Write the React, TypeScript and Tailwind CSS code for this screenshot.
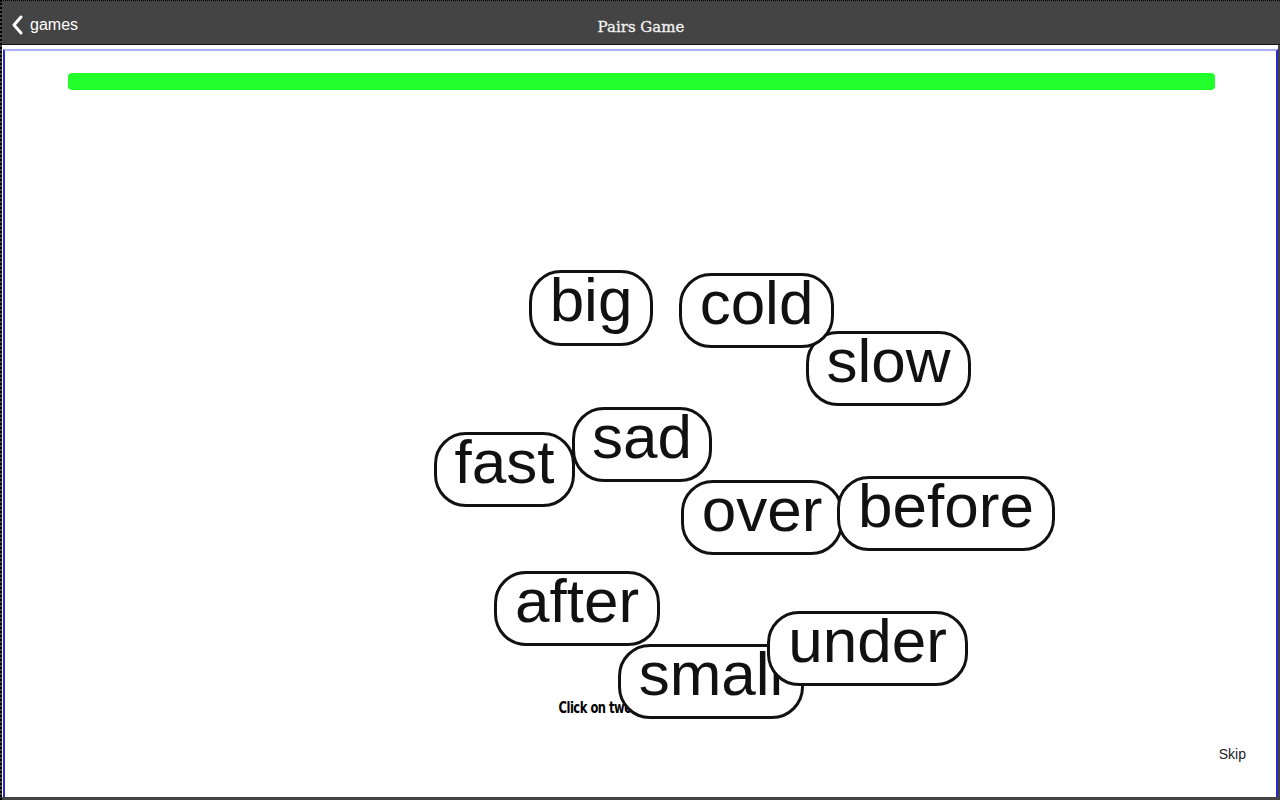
import React from "react";

type Pill = { word: string; x: number; y: number; w: number; h: number };

const OX = 6;
const OY = 52;

const pills: Pill[] = [
  { word: "slow", x: 807, y: 332, w: 165, h: 75 },
  { word: "cold", x: 680, y: 274, w: 155, h: 75 },
  { word: "big", x: 530, y: 271, w: 124, h: 76 },
  { word: "fast", x: 435, y: 433, w: 141, h: 75 },
  { word: "sad", x: 573, y: 408, w: 140, h: 75 },
  { word: "over", x: 682, y: 481, w: 162, h: 75 },
  { word: "before", x: 838, y: 477, w: 218, h: 75 },
  { word: "after", x: 495, y: 572, w: 166, h: 75 },
  { word: "small", x: 619, y: 645, w: 186, h: 75 },
  { word: "under", x: 768, y: 612, w: 201, h: 75 },
];

export default function App() {
  return (
    <div className="relative flex h-[800px] w-[1280px] flex-col overflow-hidden border-t border-l-2 border-dotted border-black bg-[#444444]">
      <header className="relative flex h-[44px] shrink-0 items-center border-b border-[#141414] bg-[#444444]">
        <div className="flex items-center pl-[8px] pt-[5px] text-white">
          <svg width="16" height="22" viewBox="0 0 16 22" fill="none">
            <path d="M11 3 L4 11 L11 19" stroke="white" strokeWidth="3" strokeLinecap="round" strokeLinejoin="round" />
          </svg>
          <span className="ml-[4px] text-[16px] leading-none" style={{ fontFamily: '"Liberation Sans", Arial, sans-serif' }}>
            games
          </span>
        </div>
        <div
          className="absolute left-0 right-0 top-[19px] text-center text-[15px] leading-none text-[#f2f2f2] [-webkit-text-stroke:0.3px_#f2f2f2]"
          style={{ fontFamily: '"DejaVu Serif", serif' }}
        >
          Pairs Game
        </div>
      </header>
      <div className="mb-[3px] mr-[2px] flex flex-1 flex-col bg-white pt-[4px]">
        <div className="relative ml-[1px] flex flex-1 flex-col border-t-2 border-r-2 border-l-2 border-t-[#aab0ff] border-r-[#2a2ad0] border-l-[#2a2ad0]">
          <div className="ml-[63px] mr-[61px] mt-[22px] h-[17px] rounded-[4px] bg-[#22ff2b]" />

          <div
            className="absolute left-[10px] right-0 top-[649px] text-center text-[16px] font-bold leading-none tracking-[-0.6px] text-black"
            style={{ fontFamily: '"DejaVu Sans Condensed", "Liberation Sans Narrow", sans-serif', transform: "scaleX(0.8)" }}
          >
            Click on two matching words
          </div>

          {pills.map((p) => (
            <div
              key={p.word}
              className="absolute flex justify-center rounded-[32px] border-[3px] border-[#111] bg-white text-[62px] leading-[54px] text-[#111]"
              style={{ left: p.x - OX, top: p.y - OY, width: p.w, height: p.h, fontFamily: '"Liberation Sans", Arial, sans-serif' }}
            >
              <span>{p.word}</span>
            </div>
          ))}

          <div
            className="absolute right-[30px] bottom-[36px] text-[14px] leading-none text-[#222]"
            style={{ fontFamily: '"Liberation Sans", Arial, sans-serif' }}
          >
            Skip
          </div>
        </div>
      </div>
    </div>
  );
}
